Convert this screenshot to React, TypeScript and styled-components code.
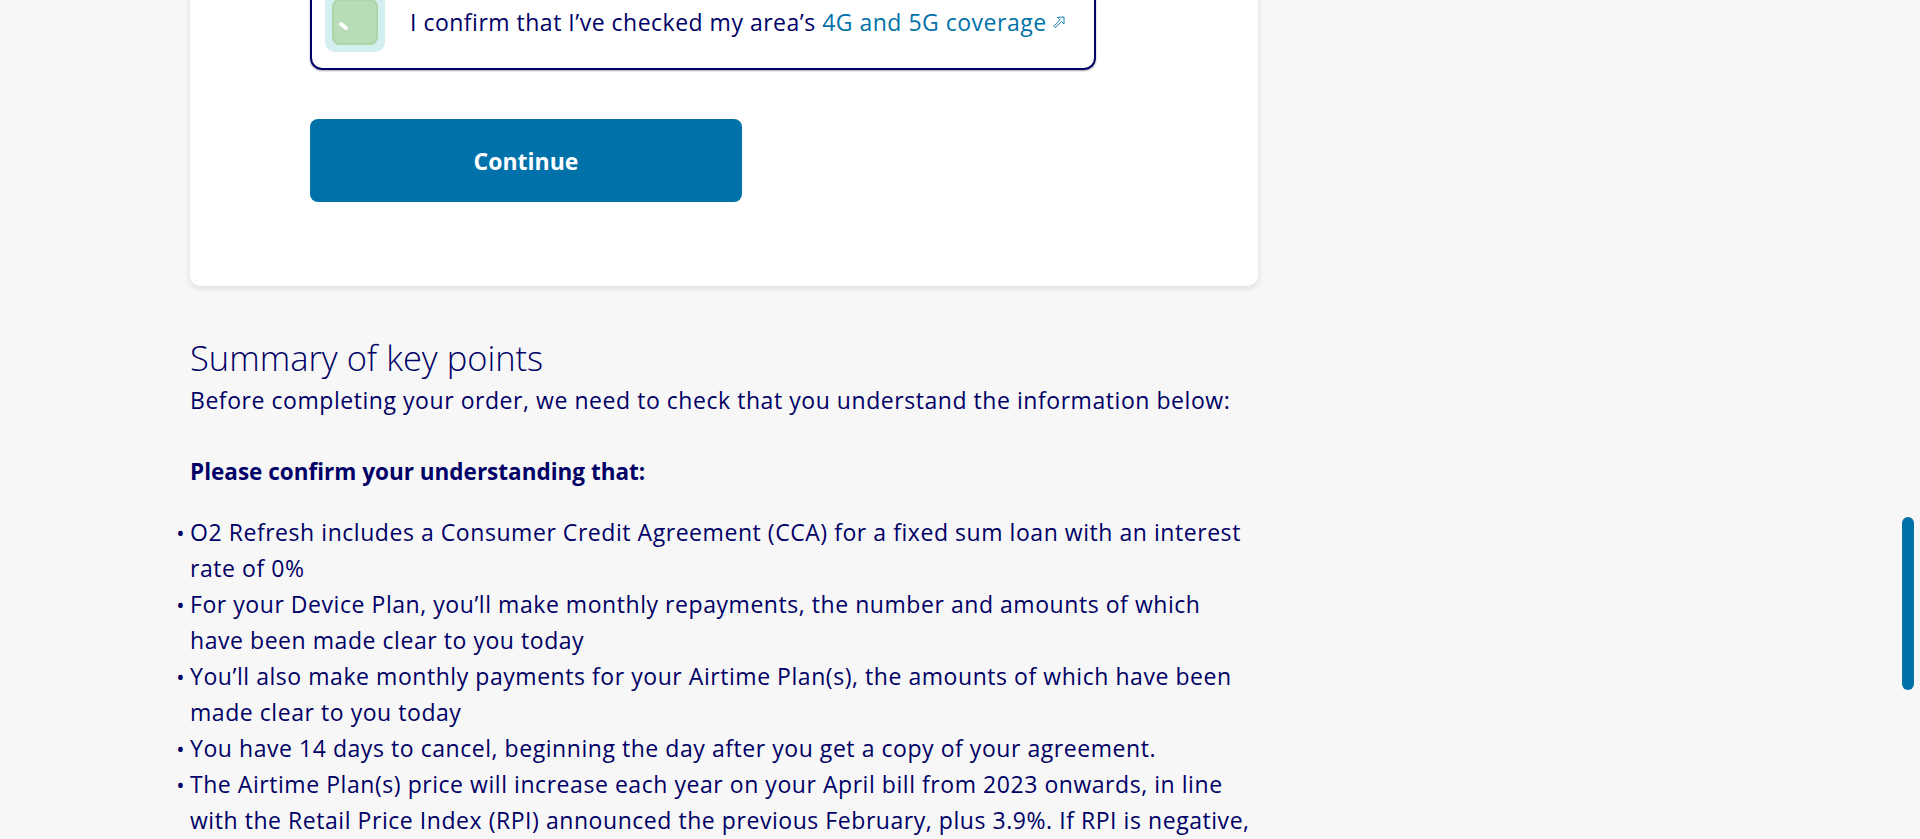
import React from "react";
import styled, { createGlobalStyle } from "styled-components";

const navy = "#000066";
const blue = "#0172a9";

const Global = createGlobalStyle`
  html, body { margin: 0; padding: 0; background: #f7f7f7; overflow: hidden; }
  body { font-family: "Open Sans", "Noto Sans", Arial, sans-serif; color: ${navy}; }
`;

const Page = styled.main`
  display: flex;
  flex-direction: column;
  width: 1068px;
  padding-left: 190px;
`;

const Card = styled.section`
  background: #fff;
  border-radius: 10px;
  box-shadow: 0 2px 6px rgba(0, 0, 0, 0.12);
  margin-top: -40px;
  padding: 0 162px 84px 120px;
  display: flex;
  flex-direction: column;
  align-items: flex-start;
`;

const ConfirmBox = styled.label`
  box-sizing: border-box;
  width: 786px;
  height: 110px;
  border: 2px solid ${navy};
  border-top: none;
  border-radius: 0 0 12px 12px;
  box-shadow: 0 1px 2px rgba(0, 0, 0, 0.35);
  display: flex;
  align-items: center;
  padding: 16px 13px 0;
  gap: 25px;
`;

const CheckRing = styled.span`
  display: flex;
  align-items: center;
  justify-content: center;
  width: 60px;
  height: 60px;
  border-radius: 10px;
  background: #d3eff0;
  flex: none;
`;

const CheckSquare = styled.span`
  width: 46px;
  height: 46px;
  border-radius: 8px;
  background: #b8dcb6;
  box-shadow: inset 0 0 0 2px #acd6aa;
  display: flex;
`;

const LabelText = styled.span`
  font-size: 23px;
  letter-spacing: 0.5px;
  line-height: 30px;
  color: ${navy};
`;

const Link = styled.a`
  color: ${blue};
  text-decoration: none;
  display: inline-flex;
  align-items: center;
  gap: 6px;
`;

const ContinueButton = styled.button`
  margin-top: 49px;
  width: 432px;
  height: 83px;
  border: none;
  border-radius: 8px;
  background: ${blue};
  color: #fff;
  font-family: "Open Sans", "Noto Sans", Arial, sans-serif;
  font-size: 23px;
  font-weight: 700;
  cursor: pointer;
`;

const Summary = styled.section`
  padding-top: 50px;
  display: flex;
  flex-direction: column;
`;

const Heading = styled.h2`
  margin: 0 0 2px;
  font-size: 34.5px;
  line-height: 44px;
  font-weight: 300;
  color: ${navy};
`;

const Para = styled.p<{ $bold?: boolean; $gap?: number }>`
  margin: 0 0 ${(p) => p.$gap ?? 0}px;
  font-size: ${(p) => (p.$bold ? "22.5px" : "23px")};
  letter-spacing: ${(p) => (p.$bold ? "0" : "0.55px")};
  line-height: 36px;
  font-weight: ${(p) => (p.$bold ? 700 : 400)};
  color: ${navy};
`;

const List = styled.ul`
  margin: 0;
  padding-left: 0;
  list-style: disc outside;
`;

const Item = styled.li`
  font-size: 23px;
  letter-spacing: 0.55px;
  line-height: 36px;
  color: ${navy};
  &::marker {
    content: "\\2022\\2005";
    font-size: 22px;
    letter-spacing: 0;
  }
`;

const ScrollThumb = styled.div`
  position: fixed;
  right: 6px;
  top: 517px;
  width: 12px;
  height: 173px;
  border-radius: 6px;
  background: ${blue};
`;

const ExternalIcon = () => (
  <svg width="12" height="12" viewBox="0 0 12 12" fill="none" stroke={blue} strokeWidth="0.9" strokeLinejoin="miter">
    <path d="M11 1 L11 8 L8.6 5.6 L2.2 11.5 L0.8 10.1 L6.9 3.8 L4.5 1.4 Z" />
  </svg>
);

const CheckMark = () => (
  <svg width="46" height="46" viewBox="0 0 46 46">
    <path d="M9 25 L14 29" stroke="#fff" strokeWidth="4" strokeLinecap="round" />
  </svg>
);

const bullets = [
  "O2 Refresh includes a Consumer Credit Agreement (CCA) for a fixed sum loan with an interest rate of 0%",
  "For your Device Plan, you\u2019ll make monthly repayments, the number and amounts of which have been made clear to you today",
  "You\u2019ll also make monthly payments for your Airtime Plan(s), the amounts of which have been made clear to you today",
  "You have 14 days to cancel, beginning the day after you get a copy of your agreement.",
  "The Airtime Plan(s) price will increase each year on your April bill from 2023 onwards, in line with the Retail Price Index (RPI) announced the previous February, plus 3.9%. If RPI is negative, we\u2019ll only apply the 3.9% increase.",
];

export default function App() {
  return (
    <>
      <Global />
      <Page>
        <Card>
          <ConfirmBox>
            <CheckRing>
              <CheckSquare>
                <CheckMark />
              </CheckSquare>
            </CheckRing>
            <LabelText>
              I confirm that I’ve checked my area’s{" "}
              <Link href="#">
                4G and 5G coverage
                <ExternalIcon />
              </Link>
            </LabelText>
          </ConfirmBox>
          <ContinueButton>Continue</ContinueButton>
        </Card>
        <Summary>
          <Heading>Summary of key points</Heading>
          <Para $gap={36}>
            Before completing your order, we need to check that you understand the information below:
          </Para>
          <Para $bold $gap={24}>
            Please confirm your understanding that:
          </Para>
          <List>
            {bullets.map((b) => (
              <Item key={b}>{b}</Item>
            ))}
          </List>
        </Summary>
      </Page>
      <ScrollThumb />
    </>
  );
}
